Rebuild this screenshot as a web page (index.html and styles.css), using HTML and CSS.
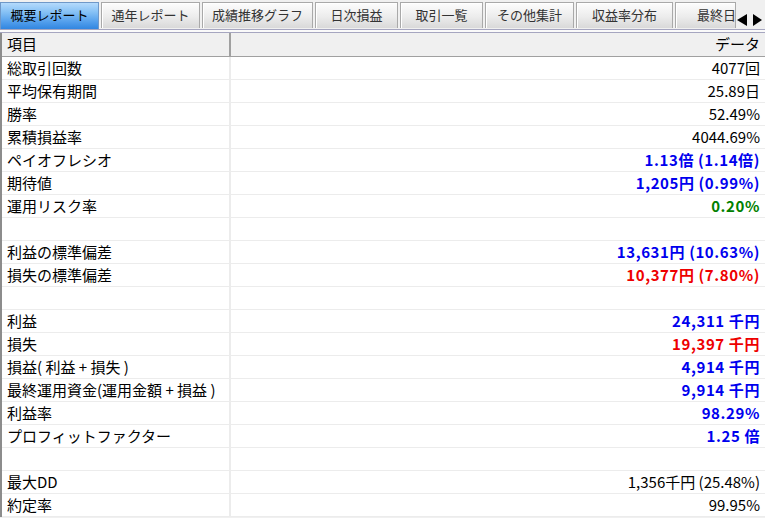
FILE: index.html
```html
<!DOCTYPE html>
<html lang="ja">
<head>
    <meta charset="UTF-8">
    <title>概要レポート</title>
    <link rel="stylesheet" href="styles.css">
</head>
<body>
    <div class="tabbar">
        <div class="tabs">
            <div class="tab current" style="width:99px">概要レポート</div>
            <div class="tab" style="width:99px">通年レポート</div>
            <div class="tab" style="width:111px">成績推移グラフ</div>
            <div class="tab" style="width:83px">日次損益</div>
            <div class="tab" style="width:83px">取引一覧</div>
            <div class="tab" style="width:89px">その他集計</div>
            <div class="tab" style="width:97px">収益率分布</div>
            <div class="tab last" style="width:61px">最終日</div>
        </div>
        <div class="scroller">
            <span class="arrow left"></span>
            <span class="arrow right"></span>
        </div>
    </div>
    <div class="tabline"></div>

    <div class="report">
        <div class="row head">
            <div class="name">項目</div>
            <div class="value">データ</div>
        </div>
        <div class="row"><div class="name">総取引回数</div><div class="value">4077回</div></div>
        <div class="row"><div class="name">平均保有期間</div><div class="value">25.89日</div></div>
        <div class="row"><div class="name">勝率</div><div class="value">52.49%</div></div>
        <div class="row"><div class="name">累積損益率</div><div class="value">4044.69%</div></div>
        <div class="row"><div class="name">ペイオフレシオ</div><div class="value blue">1.13倍 (1.14倍)</div></div>
        <div class="row"><div class="name">期待値</div><div class="value blue">1,205円 (0.99%)</div></div>
        <div class="row"><div class="name">運用リスク率</div><div class="value green">0.20%</div></div>
        <div class="row"><div class="name"></div><div class="value"></div></div>
        <div class="row"><div class="name">利益の標準偏差</div><div class="value blue">13,631円 (10.63%)</div></div>
        <div class="row"><div class="name">損失の標準偏差</div><div class="value red">10,377円 (7.80%)</div></div>
        <div class="row"><div class="name"></div><div class="value"></div></div>
        <div class="row"><div class="name">利益</div><div class="value blue">24,311 千円</div></div>
        <div class="row"><div class="name">損失</div><div class="value red">19,397 千円</div></div>
        <div class="row"><div class="name">損益( 利益 + 損失 )</div><div class="value blue">4,914 千円</div></div>
        <div class="row"><div class="name">最終運用資金(運用金額 + 損益 )</div><div class="value blue">9,914 千円</div></div>
        <div class="row"><div class="name">利益率</div><div class="value blue">98.29%</div></div>
        <div class="row"><div class="name">プロフィットファクター</div><div class="value blue">1.25 倍</div></div>
        <div class="row"><div class="name"></div><div class="value"></div></div>
        <div class="row"><div class="name">最大DD</div><div class="value">1,356千円 (25.48%)</div></div>
        <div class="row"><div class="name">約定率</div><div class="value">99.95%</div></div>
    </div>
</body>
</html>
```

FILE: styles.css
```css
body {
    margin: 0;
    background-color: #f0f0f0;
    font-family: "Noto Sans CJK JP", "Noto Sans", sans-serif;
    color: #000;
    width: 765px;
    height: 518px;
    overflow: hidden;
}
.tabbar {
    display: flex;
    height: 29px;
    padding-top: 2px;
    box-sizing: border-box;
}
.tabs {
    display: flex;
    gap: 2px;
    width: 736px;
    overflow: hidden;
    align-items: flex-start;
}
.tab {
    flex: none;
    height: 26px;
    box-sizing: border-box;
    border: 1px solid #a9a9a9;
    border-bottom: none;
    box-shadow: inset 1px 1px 0 #ffffff;
    background-color: #e6e6e6;
    background-image: linear-gradient(#fdfdfd, #ececec 55%, #d9d9d9);
    font-size: 13px;
    line-height: 24px;
    text-align: center;
    color: #333;
    white-space: nowrap;
    overflow: hidden;
}
.tab.last {
    text-align: left;
    padding-left: 21px;
}
.tabs .current {
    height: 27px;
    border-color: #6f98c8;
    box-shadow: none;
    background-color: #5aa4ec;
    background-image: linear-gradient(to bottom, #b4dafc 0%, #86c1f5 35%, #4f9ceb 75%, #3186e0 100%);
    color: #000;
}
.scroller {
    display: flex;
    align-items: center;
    padding: 7px 0 0 1px;
    height: 22px;
}
.arrow {
    width: 0;
    height: 0;
    border-top: 6px solid transparent;
    border-bottom: 6px solid transparent;
}
.arrow.left {
    border-right: 10px solid #000;
}
.arrow.right {
    border-left: 9px solid #000;
    margin-left: 6px;
}
.tabline {
    height: 4px;
    box-sizing: border-box;
    border-top: 1px solid #a6a6c0;
    border-bottom: 1px solid #a6a6c0;
    background-color: #fafafa;
}
.report {
    background-color: #ffffff;
    border-left: 2px solid #8c8c8c;
}
.row {
    display: grid;
    grid-template-columns: 229px 1fr;
    height: 23px;
    box-sizing: border-box;
    border-bottom: 1px solid #ececec;
    font-size: 15px;
    line-height: 22px;
}
.name {
    padding-left: 5px;
    border-right: 2px solid #ececec;
    white-space: nowrap;
    overflow: hidden;
}
.value {
    text-align: right;
    padding-right: 5px;
    white-space: nowrap;
}
.head {
    background-color: #f0f0f0;
    height: 24px;
    border-bottom: 1px solid #a0a0a0;
}
.head .name {
    border-right: 2px solid #a0a0a0;
}
.blue,
.green,
.red {
    font-weight: bold;
    letter-spacing: 0.6px;
}
.blue {
    color: #0000ee;
}
.green {
    color: #008000;
}
.red {
    color: #ee0000;
}
```
